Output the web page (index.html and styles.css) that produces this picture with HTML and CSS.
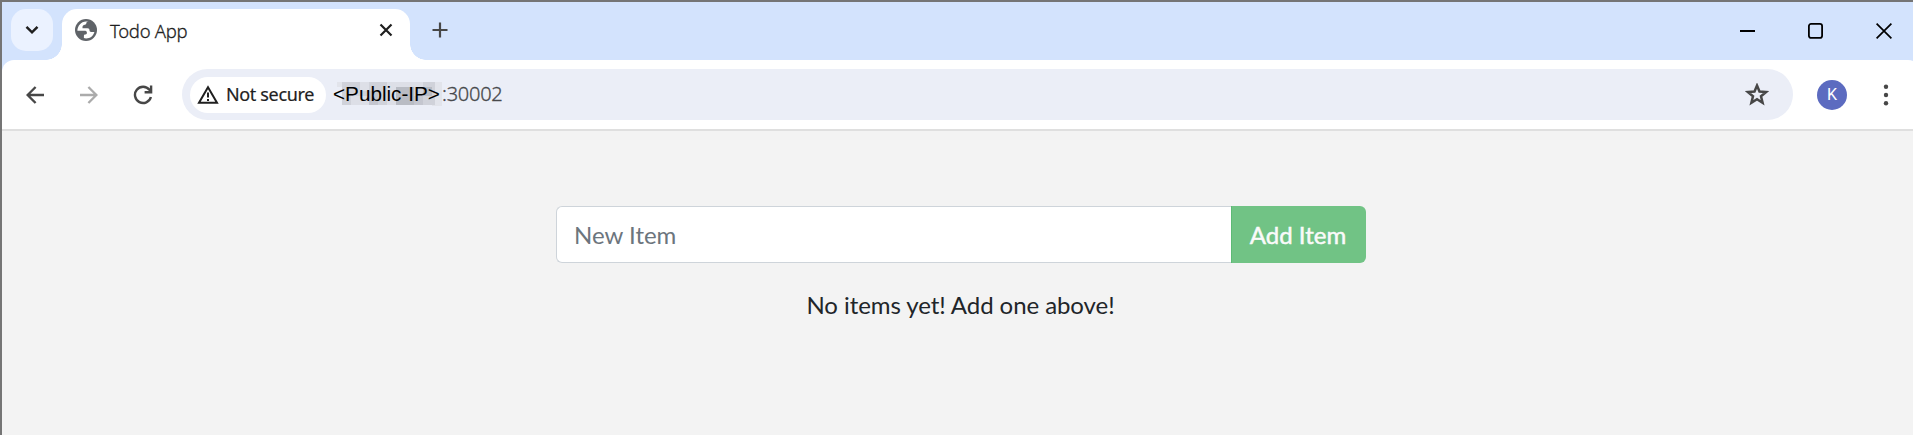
FILE: index.html
```html
<!DOCTYPE html>
<html lang="en">
<head>
<meta charset="utf-8">
<title>Todo App</title>
<link rel="stylesheet" href="styles.css">
</head>
<body>
<div class="window">
  <header class="tabstrip">
    <button class="tab-search" aria-label="Search tabs">
      <svg width="16" height="16" viewBox="0 0 16 16"><path d="M2.500 4.900 8 10.300l5.500-5.400" fill="none" stroke="#1f1f1f" stroke-width="2.500"/></svg>
    </button>
    <div class="tab">
      <svg class="favicon" width="22" height="22" viewBox="0 0 22 22"><circle cx="11" cy="11" r="11" fill="#5f6368"/><path d="M13.6 2.6C12 2.6 11.300 3.500 11.300 4.600c0 1-1.200 1-2.300 1.400-1.600.5-1.500 1.700-1.500 3.200h5c1.500 0 2 .8 2 2.100 0 1.100.6 1.600 1.600 1.600h3.300c-.9 3.700-4.200 6.500-8.300 6.500-.8 0-1.500-.1-2.200-.3v-2.400c0-.8.600-1.200 1.500-1.200 1 0 1.500-.6 1.500-1.700 0-1.500-1-2-2.300-2H2.400C2.400 7 6 2.400 11 2.400c.9 0 1.800.1 2.600.2z" fill="#fff"/></svg>
      <span class="tab-title">Todo App</span>
      <svg class="tab-close" width="14" height="14" viewBox="0 0 14 14"><path d="m1.500 1.500 11 11m0-11-11 11" stroke="#1f1f1f" stroke-width="2.200"/></svg>
    </div>
    <svg class="new-tab" width="16" height="16" viewBox="0 0 16 16"><path d="M8 .5v15M.5 8h15" stroke="#474747" stroke-width="2.200"/></svg>
    <div class="controls">
      <svg width="15" height="16" viewBox="0 0 15 16"><path d="M0 8h15" stroke="#000" stroke-width="2"/></svg>
      <svg width="15" height="16" viewBox="0 0 15 16"><rect x=".9" y=".9" width="13.200" height="14" rx="2.200" fill="none" stroke="#000" stroke-width="1.800"/></svg>
      <svg width="16" height="16" viewBox="0 0 16 16"><path d="m.6.6 14.800 14.800m0-14.800L.6 15.400" stroke="#000" stroke-width="1.700"/></svg>
    </div>
  </header>
  <nav class="toolbar">
    <svg class="back" width="18" height="18" viewBox="0 0 18 18"><path d="M18 9H1.800M9.600 1 1.600 9l8 8" fill="none" stroke="#474747" stroke-width="2.400"/></svg>
    <svg class="forward" width="18" height="18" viewBox="0 0 18 18"><path d="M0 9h16.200M8.400 1l8 8-8 8" fill="none" stroke="#ababab" stroke-width="2.400"/></svg>
    <svg class="reload" width="20" height="20" viewBox="0 0 20 20"><path d="M17.900 12a8.100 8.100 0 1 1-1.500-7.200l1.500 1.700M18.100.6v6.600h-6.500" fill="none" stroke="#474747" stroke-width="2.400"/></svg>
    <div class="omnibox">
      <div class="chip">
        <svg width="22" height="19" viewBox="0 0 22 19"><path d="M11 2.200 20 17.700H2z" fill="none" stroke="#1f1f1f" stroke-width="2"/><path d="M11 7.500v5m0 1.500v2" stroke="#1f1f1f" stroke-width="2"/></svg>
        <span>Not secure</span>
      </div>
      <span class="host"><svg class="mosaic" width="105" height="24" viewBox="0 0 105 24"><path fill="#e2e4eb" d="M0 0h5v5H0zM95 0h10v24H95z"/><path fill="#d0d2da" d="M5 0h93v23H5z"/><path fill="#dddfe7" d="M23 0h9v9h-9zM50 0h9v23h-9zM14 14h18v9H14zM59 0h27v5H59z"/><path fill="#b9bcc4" d="M59 5h18v18H59zM86 5h9v9h-9z"/><path fill="#c4c6cf" d="M32 9h9v14h-9zM77 14h9v9h-9z"/></svg><b>&lt;Public-IP&gt;</b></span>
      <span class="port">:30002</span>
      <svg class="star" width="24" height="23" viewBox="0 0 24 23"><path d="m12 2.600 2.500 6 6.500.5-5 4.200 1.600 6.400-5.600-3.500-5.600 3.500L8 13.300 3 9.100l6.500-.5z" fill="none" stroke="#474747" stroke-width="2.500"/></svg>
    </div>
    <div class="avatar">K</div>
    <svg class="menu" width="6" height="22" viewBox="0 0 6 22"><g fill="#474747"><circle cx="3" cy="2.700" r="2.200"/><circle cx="3" cy="11" r="2.200"/><circle cx="3" cy="19.300" r="2.200"/></g></svg>
  </nav>
  <main class="page">
    <form class="item-form">
      <input class="item-input" type="text" placeholder="New Item">
      <button class="item-add" type="button">Add Item</button>
    </form>
    <p class="empty">No items yet! Add one above!</p>
  </main>
</div>
</body>
</html>
```
FILE: styles.css
```css
* { box-sizing: border-box; }
body { margin: 0; }
svg { display: block; flex: none; }
button { border: 0; padding: 0; }
.window {
  height: 435px;
  border: solid #757575;
  border-width: 2px 0 0 2px;
  background: #d3e3fd;
  overflow: hidden;
  display: flex;
  flex-direction: column;
  font-family: "Noto Sans", "Open Sans", sans-serif;
}
.tabstrip { height: 58px; flex: none; display: flex; padding: 7px 21px 0 9px; }
.tab-search {
  width: 42px; height: 42px; border-radius: 15px; background: #ebf2ff;
  display: flex; align-items: center; justify-content: center;
}
.tab {
  position: relative; margin-left: 9px; width: 348px; height: 51px;
  padding: 10px 17px 0 13px; display: flex; align-items: flex-start;
  background: #fff; border-radius: 15px 15px 0 0;
}
.tab::before, .tab::after { content: ""; position: absolute; bottom: 0; width: 16px; height: 16px; }
.tab::before { left: -16px; background: radial-gradient(circle at 0 0, transparent 15.500px, #fff 16px); }
.tab::after { right: -16px; background: radial-gradient(circle at 100% 0, transparent 15.500px, #fff 16px); }
.tab-title { margin: 0 auto 0 13px; font: 300 18.500px/24px "Noto Sans", sans-serif; letter-spacing: -0.300px; color: #1f1f1f; -webkit-text-stroke: 0.300px #1f1f1f; }
.tab-close { margin-top: 4px; }
.new-tab { margin: 13px 0 0 22px; }
.controls { margin: 14px 0 0 auto; display: flex; gap: 53px; }
.toolbar {
  height: 71px; flex: none; width: 1918px; display: flex; align-items: center;
  padding: 1px 0 1px 24px; background: #fff; border-bottom: 2px solid #dfdfdf;
  border-radius: 12px 12px 0 0;
}
.forward { margin-left: 36px; }
.reload { margin-left: 35px; }
.omnibox {
  margin-left: 29px; width: 1611px; height: 51px; padding: 0 24px 0 8px;
  border-radius: 26px; background: #ebeef7; display: flex; align-items: center;
}
.chip {
  width: 136px; height: 36px; border-radius: 18px; background: #fff; padding-left: 7px;
  display: flex; align-items: center; gap: 7px; font-size: 18px; letter-spacing: -0.350px; color: #1f1f1f; white-space: nowrap;
  -webkit-text-stroke: 0.200px #1f1f1f;
}
.chip span { margin-bottom: 2px; }
.host { position: relative; margin: 0 0 1px 7px; width: 109px; font: 20.700px/24px "Liberation Sans", Arial, sans-serif; color: #000; }
.host b { position: relative; font-weight: 400; }
.mosaic { position: absolute; left: 4px; top: 0; }
.port { margin-bottom: 2px; font: 300 20px/26px "Noto Sans", sans-serif; letter-spacing: -0.250px; color: #47494c; -webkit-text-stroke: 0.300px #47494c; }
.star { margin-left: auto; }
.avatar {
  margin-left: 24px; width: 30px; height: 30px; border-radius: 50%; background: #5c6bc0;
  color: #fff; font: 16px/30px Roboto, sans-serif; text-align: center;
}
.menu { margin-left: 36px; }
.page { flex: 1; background: #f3f3f3; padding: 75px 0 0 554px; font: 24px/36px Lato, sans-serif; }
.item-form { width: 810px; height: 57px; display: flex; margin: 0; }
.item-input {
  flex: 1; min-width: 0; border: 1px solid #ced4da; border-right: 0; border-radius: 6px 0 0 6px;
  background: #fff; padding: 0 18px 0 17px; font: inherit; color: #495057;
}
.item-input::placeholder { color: #6c757d; opacity: 1; }
.item-add {
  width: 135px; border-left: 1px solid #5dba75; border-radius: 0 6px 6px 0; padding-right: 2px;
  background: #71c385; color: #fafafa; font: 24px/36px Lato, sans-serif; -webkit-text-stroke: 0.500px #fafafa;
}
.empty { margin: 24px 0 0; width: 809px; text-align: center; letter-spacing: -0.070px; color: #212529; }
```
